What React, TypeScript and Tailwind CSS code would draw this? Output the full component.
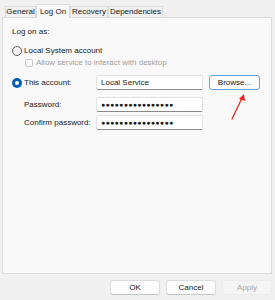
import React from 'react'

const font = { fontFamily: '"Liberation Sans", Arial, sans-serif' }

function Tab({ label, active, w }: { label: string; active?: boolean; w: string }) {
  return active ? (
    <div className={`${w} h-[14px] -mb-px flex items-center justify-center border border-b-0 border-[#dcdcdc] bg-[#f9f9f9] text-[#1a1a1a] rounded-t-[2px] z-10`}>
      {label}
    </div>
  ) : (
    <div className={`${w} h-[11px] mt-[3px] flex items-center justify-center border border-b-0 border-[#dcdcdc] bg-[#f0f0f0] text-[#1a1a1a]`}>
      {label}
    </div>
  )
}

function Field({ label, value }: { label: string; value: string }) {
  return (
    <div className="flex items-center h-[15px]">
      <span className="w-[72px] shrink-0 text-[#1a1a1a] whitespace-nowrap">{label}</span>
      <div className="w-[107px] h-[15px] bg-white border border-[#e3e3e3] border-b-[#8a8a8a] rounded-[2px] flex items-center px-[4px] text-[#1a1a1a]">
        <span className="text-[7px] tracking-[0.3px] leading-none">{value}</span>
      </div>
    </div>
  )
}

export default function App() {
  return (
    <div style={font} className="relative w-[275px] h-[300px] bg-[#f0f0f0] text-[8px] leading-none flex flex-col select-none">
      <div className="flex items-end pl-[5px] pt-[3px] h-[17px]">
        <Tab label="General" w="w-[31px]" />
        <Tab label="Log On" w="w-[34px]" active />
        <Tab label="Recovery" w="w-[38px]" />
        <Tab label="Dependencies" w="w-[55px]" />
      </div>
      <div className="mx-[2px] mr-[3px] h-[257px] border border-[#dcdcdc] bg-[#f9f9f9] pl-[9px] pt-[10px]">
        <div className="text-[#1a1a1a]">Log on as:</div>

        <div className="flex items-center gap-[2px] mt-[10px]">
          <span className="w-[10px] h-[10px] rounded-full border border-[#5c5c5c] bg-[#f4f4f4]" />
          <span className="text-[#1a1a1a]">Local System account</span>
        </div>
        <div className="flex items-center gap-[3px] mt-[3px] pl-[13px]">
          <span className="w-[8px] h-[8px] rounded-[2px] border border-[#c8c8c8] bg-[#fbfbfb]" />
          <span className="text-[#a0a0a0]">Allow service to interact with desktop</span>
        </div>

        <div className="flex items-center mt-[8px]">
          <span className="w-[10px] h-[10px] rounded-full bg-[#005fb8] flex items-center justify-center mr-[2px]">
            <span className="w-[4px] h-[4px] rounded-full bg-white" />
          </span>
          <span className="w-[72px] shrink-0 text-[#1a1a1a]">This account:</span>
          <div className="w-[107px] h-[15px] bg-white border border-[#e3e3e3] border-b-[#8a8a8a] rounded-[2px] flex items-center px-[4px] text-[#1a1a1a]">
            Local Service
          </div>
          <div className="ml-[6px] w-[51px] h-[15px] bg-[#fdfdfd] border border-[#6ea0d8] rounded-[3px] flex items-center justify-center text-[#1a1a1a]">
            Browse...
          </div>
        </div>

        <div className="flex flex-col gap-[3px] mt-[7px] pl-[12px]">
          <Field label="Password:" value="●●●●●●●●●●●●●●●●" />
          <Field label="Confirm password:" value="●●●●●●●●●●●●●●●●" />
        </div>
      </div>

      <div className="flex justify-end gap-[6px] pr-[3px] pt-[6px]">
        <div className="w-[50px] h-[15px] bg-[#fdfdfd] border border-[#dcdcdc] border-b-[#c4c4c4] rounded-[3px] flex items-center justify-center text-[#1a1a1a]">OK</div>
        <div className="w-[50px] h-[15px] bg-[#fdfdfd] border border-[#dcdcdc] border-b-[#c4c4c4] rounded-[3px] flex items-center justify-center text-[#1a1a1a]">Cancel</div>
        <div className="w-[50px] h-[15px] bg-[#f5f5f5] border border-[#ececec] rounded-[3px] flex items-center justify-center text-[#a8a8a8]">Apply</div>
      </div>

      <svg className="absolute left-[228px] top-[92px]" width="20" height="30" viewBox="0 0 20 30">
        <line x1="4" y1="27" x2="14" y2="6" stroke="#ee2222" strokeWidth="1.3" strokeLinecap="round" />
        <polygon points="16,2 11,7 17,9" fill="#ee2222" />
      </svg>
    </div>
  )
}
